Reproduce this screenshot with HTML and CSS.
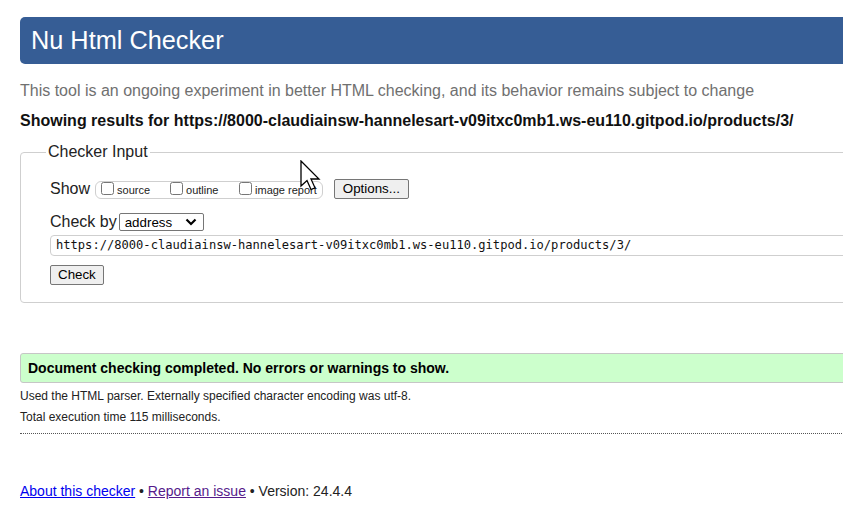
FILE: index.html
```html
<!DOCTYPE html>
<html lang="en">
<head>
<meta charset="utf-8">
<title>Showing results for https://8000-claudiainsw-hannelesart-v09itxc0mb1.ws-eu110.gitpod.io/products/3/ - Nu Html Checker</title>
<link rel="stylesheet" href="styles.css">
</head>
<body>
<div class="page">
  <h1 class="title">Nu Html Checker</h1>
  <p class="intro">This tool is an ongoing experiment in better HTML checking, and its behavior remains subject to change</p>
  <p class="results">Showing results for https://8000-claudiainsw-hannelesart-v09itxc0mb1.ws-eu110.gitpod.io/products/3/</p>

  <fieldset class="checker">
    <legend class="legend">Checker Input</legend>
    <div class="row show-row">
      <span class="label">Show</span>
      <span class="showbox">
        <label class="opt opt-source"><input type="checkbox" class="cb"><span>source</span></label>
        <label class="opt opt-outline"><input type="checkbox" class="cb"><span>outline</span></label>
        <label class="opt opt-image"><input type="checkbox" class="cb"><span>image report</span></label>
      </span>
      <button type="button" class="btn btn-options">Options...</button>
    </div>
    <div class="row by-row">
      <span class="label">Check by</span>
      <span class="select">
        <span class="select-text">address</span>
        <svg class="chevron" width="12" height="8" viewBox="0 0 12 8"><path d="M1.5 1.5 L6 6 L10.5 1.5" fill="none" stroke="#000" stroke-width="2.2"/></svg>
      </span>
    </div>
    <div class="url">https://8000-claudiainsw-hannelesart-v09itxc0mb1.ws-eu110.gitpod.io/products/3/</div>
    <div class="row check-row">
      <button type="button" class="btn btn-check">Check</button>
    </div>
  </fieldset>

  <div class="success">Document checking completed. No errors or warnings to show.</div>
  <p class="meta meta-first">Used the HTML parser. Externally specified character encoding was utf-8.</p>
  <p class="meta meta-last">Total execution time 115 milliseconds.</p>

  <p class="footer"><a href="#" class="link">About this checker</a> • <a href="#" class="link visited">Report an issue</a> • Version: 24.4.4</p>
</div>
<svg class="cursor" width="22" height="32" viewBox="0 0 22 32">
  <path d="M1 1 L1 26 L7 20.5 L11 29.5 L15 27.8 L11 19 L19 19 Z" fill="#fff" stroke="#000" stroke-width="1.3" stroke-linejoin="miter"/>
</svg>
</body>
</html>
```

FILE: styles.css
```css
html {
  overflow: hidden;
  background: #fff;
}
body {
  margin: 0;
  font-family: "Liberation Sans", Arial, sans-serif;
  color: #222;
  position: relative;
}
.page {
  width: 920px;
  padding: 17px 0 0 20px;
}
.title {
  margin: 0;
  height: 47px;
  line-height: 46px;
  padding: 0 0 0 11px;
  font-size: 25.3px;
  font-weight: normal;
  color: #fff;
  background: #365d95;
  border-radius: 5px 0 0 5px;
}
.intro {
  margin: 17px 0 0;
  font-size: 16px;
  line-height: 20px;
  color: #707070;
}
.results {
  margin: 10px 0 0;
  font-size: 16px;
  line-height: 20px;
  font-weight: bold;
  color: #111;
}
.checker {
  margin: 11px 0 0;
  padding: 0 0 17px 29px;
  border: 1px solid #cfcfcf;
  border-radius: 4px;
}
.legend {
  padding: 0 2px;
  margin-left: -4px;
  font-size: 16px;
  line-height: 20px;
  color: #222;
}
.row {
  display: flex;
  align-items: center;
}
.label {
  font-size: 16px;
  line-height: 20px;
  color: #222;
}
.show-row {
  margin-top: 17px;
  height: 20px;
}
.showbox {
  display: flex;
  align-items: flex-start;
  align-self: flex-end;
  box-sizing: border-box;
  height: 18px;
  margin-left: 5px;
  padding: 0 5px 0 5px;
  border: 1px solid #cfcfcf;
  border-radius: 6px;
}
.opt {
  display: flex;
  align-items: flex-start;
  font-size: 11px;
  line-height: 13px;
  color: #222;
}
.opt-source,
.opt-outline {
  width: 69px;
}
.cb {
  margin: 0 3px 0 0;
  width: 13px;
  height: 13px;
}
.opt span {
  margin-top: 2px;
}
.btn {
  box-sizing: border-box;
  font-family: "Liberation Sans", Arial, sans-serif;
  font-size: 13.333px;
  line-height: 16px;
  padding: 1px 7px;
  color: #000;
  background: #efefef;
  border: 1px solid #767676;
  border-radius: 2px;
}
.btn-options {
  margin-left: 11px;
  height: 20px;
  padding: 1px 8px;
}
.by-row {
  margin-top: 13px;
  height: 20px;
}
.select {
  display: flex;
  align-items: center;
  justify-content: space-between;
  box-sizing: border-box;
  width: 85px;
  height: 18px;
  margin-left: 2px;
  padding: 0 6px 0 5px;
  border: 1px solid #767676;
  border-radius: 2px;
  font-size: 13.333px;
  color: #000;
}
.chevron {
  display: block;
}
.url {
  box-sizing: border-box;
  margin-top: 3px;
  height: 21px;
  padding: 0 5px;
  border: 1px solid #cfcfcf;
  border-radius: 4px;
  font-family: "DejaVu Sans Mono", "Liberation Mono", monospace;
  font-size: 12.1px;
  line-height: 19px;
  color: #111;
  white-space: nowrap;
}
.check-row {
  margin-top: 9px;
}
.btn-check {
  height: 20px;
}
.success {
  margin-top: 50px;
  box-sizing: border-box;
  height: 30px;
  padding: 0 7px;
  line-height: 28px;
  font-size: 14px;
  font-weight: bold;
  color: #000;
  background: #ccffcc;
  border: 1px solid #c6c6c6;
  border-radius: 3px 0 0 3px;
}
.meta {
  margin: 0;
  font-size: 12px;
  line-height: 15px;
  color: #222;
}
.meta-first {
  margin-top: 6px;
}
.meta-last {
  margin-top: 6px;
  padding-bottom: 8px;
  border-bottom: 1px dotted #555;
}
.footer {
  margin: 48px 0 0;
  font-size: 14px;
  line-height: 18px;
  color: #222;
}
.link {
  color: #0000ee;
}
.visited {
  color: #551a8b;
}
.cursor {
  position: absolute;
  left: 300px;
  top: 160px;
}
```
